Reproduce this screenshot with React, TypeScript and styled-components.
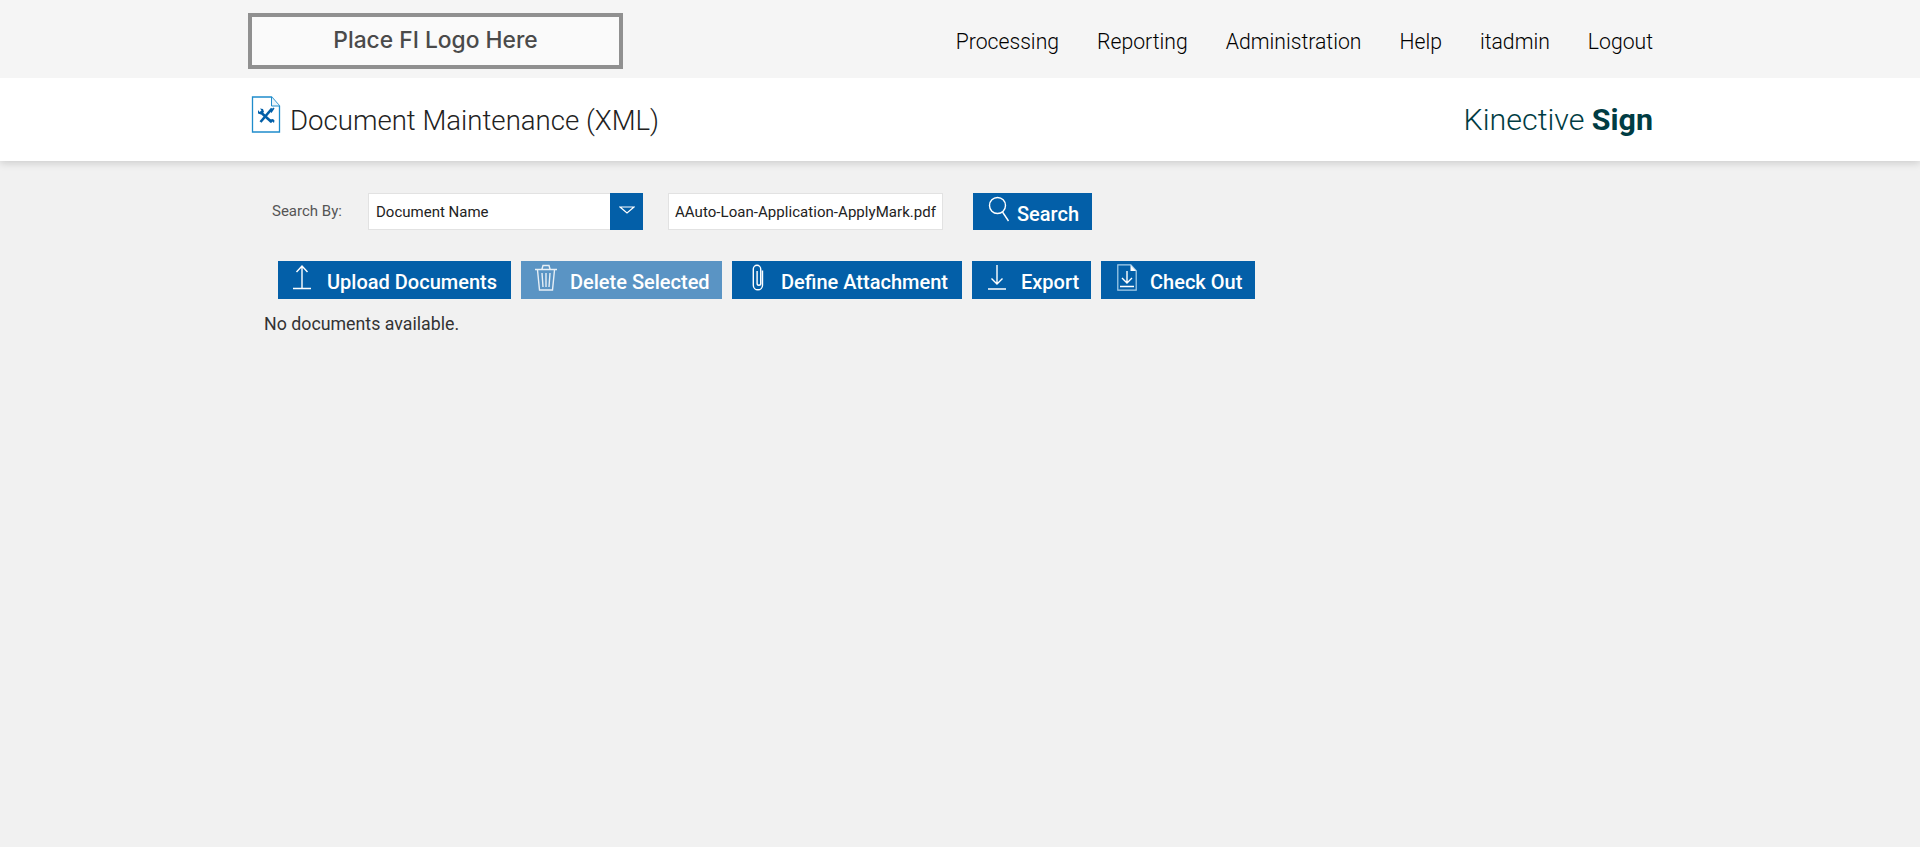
import React from "react";
import styled, { createGlobalStyle } from "styled-components";

const Global = createGlobalStyle`
  html, body { margin: 0; padding: 0; background: #f1f1f1; }
  body { font-family: Roboto, "Liberation Sans", sans-serif; min-height: 847px; }
  * { box-sizing: border-box; }
`;

const TopBar = styled.header`
  height: 78px;
  background: #f5f5f5;
  padding: 13px 267px 0 248px;
  display: flex;
  justify-content: space-between;
  align-items: flex-start;
  position: relative;
  z-index: 1;
`;
const LogoBox = styled.div`
  width: 375px;
  height: 56px;
  border: 4px solid #909090;
  background: #fafafa;
  display: flex;
  align-items: center;
  justify-content: center;
  font-family: Inter, "Noto Sans", sans-serif;
  font-size: 22.8px;
  font-weight: 500;
  color: #4a4a4a;
  padding-bottom: 4px;
`;
const Nav = styled.nav`
  display: flex;
  gap: 38px;
  padding-top: 16px;
`;
const NavLink = styled.a`
  font-size: 21.2px;
  font-weight: 300;
  line-height: 26px;
  color: #000;
`;
const TitleBar = styled.div`
  height: 83px;
  background: #fff;
  box-shadow: 0 2px 8px rgba(0, 0, 0, 0.16);
  padding: 18px 267px 0 251px;
  display: flex;
  justify-content: space-between;
  align-items: flex-start;
  position: relative;
`;
const TitleLeft = styled.div`
  display: flex;
  align-items: flex-start;
  gap: 9px;
`;
const Title = styled.h1`
  margin: 8px 0 0;
  font-size: 27.6px;
  line-height: 34px;
  font-weight: 300;
  color: #222;
`;
const Brand = styled.div`
  margin-top: 7px;
  font-size: 30.4px;
  line-height: 34px;
  font-weight: 300;
  color: #003c43;
  b { font-weight: 700; }
`;
const Content = styled.main`
  padding: 32px 0 0 264px;
`;
const SearchRow = styled.div`
  display: flex;
  align-items: center;
  height: 37px;
  padding-left: 8px;
`;
const SearchLabel = styled.label`
  width: 96px;
  font-size: 15px;
  color: #555;
  margin-top: -2px;
`;
const SelectBox = styled.div`
  width: 275px;
  height: 37px;
  display: flex;
  background: #fff;
  border: 1px solid #e2e2e2;
  border-right: 0;
  font-size: 15px;
  color: #222;
  align-items: center;
  padding: 1px 0 0 7px;
  position: relative;
`;
const Caret = styled.span`
  position: absolute;
  right: 0;
  top: -1px;
  width: 33px;
  height: 37px;
  background: #035fa8;
  display: flex;
  align-items: center;
  justify-content: center;
  padding-bottom: 3px;
`;
const TextBox = styled.div`
  width: 275px;
  height: 37px;
  margin-left: 25px;
  background: #fff;
  border: 1px solid #e2e2e2;
  display: flex;
  align-items: center;
  padding: 1px 5px 0 6px;
`;
const TextValue = styled.span`
  display: block;
  width: 100%;
  overflow: hidden;
  white-space: nowrap;
  font-size: 15px;
  letter-spacing: 0.05px;
  color: #222;
`;
const Btn = styled.button<{ $disabled?: boolean; $w: number; $gap: number; $pad: number }>`
  width: ${(p) => p.$w}px;
  height: 38px;
  border: 0;
  padding: 4px 0 0 ${(p) => p.$pad}px;
  display: flex;
  align-items: center;
  gap: ${(p) => p.$gap}px;
  background: ${(p) => (p.$disabled ? "#5a94c4" : "#035fa8")};
  color: #fff;
  font-family: inherit;
  font-size: 20px;
  font-weight: 500;
  white-space: nowrap;
  svg { flex: none; margin-top: -10px; }
`;
const SearchBtn = styled(Btn)`
  margin-left: 30px;
  height: 37px;
`;
const Actions = styled.div`
  display: flex;
  gap: 10px;
  margin-top: 31px;
  padding-left: 14px;
`;
const Empty = styled.p`
  margin: 11px 0 0;
  font-size: 17.8px;
  line-height: 28px;
  color: #333;
`;

const s = { fill: "none", stroke: "#fff", strokeWidth: 1.4 };

const App = () => (
  <>
    <Global />
    <TopBar>
      <LogoBox>Place FI Logo Here</LogoBox>
      <Nav>
        {["Processing", "Reporting", "Administration", "Help", "itadmin", "Logout"].map((n) => (
          <NavLink key={n}>{n}</NavLink>
        ))}
      </Nav>
    </TopBar>
    <TitleBar>
      <TitleLeft>
        <svg width="30" height="37" viewBox="0 0 30 37">
          <path d="M1.5 1h19l8 9v26h-27z" fill="#fff" stroke="#1f8ccb" strokeWidth="1.3" />
          <path d="M20.5 1v9h8" fill="#eaf4fa" stroke="#1f8ccb" strokeWidth="1" />
          <path d="M10 16.5l10.5 9.5" stroke="#035fa8" strokeWidth="2.6" fill="none" />
          <path d="M21 12.5L9.5 26" stroke="#035fa8" strokeWidth="2.6" fill="none" />
          <path d="M7 14l1.5 2 2-1.5L9 12.5l3 .5 1 3-3 2.5-3-1z" fill="#035fa8" />
          <path d="M19 23.5l3-.5 1.5 1.5-.5 2.5-1.5-1.5-1 1.5z" fill="#035fa8" />
          <path d="M18.5 15l4-3.5 1 1-3 4.5z" fill="#035fa8" />
        </svg>
        <Title>Document Maintenance (XML)</Title>
      </TitleLeft>
      <Brand>
        Kinective <b>Sign</b>
      </Brand>
    </TitleBar>
    <Content>
      <SearchRow>
        <SearchLabel>Search By:</SearchLabel>
        <SelectBox>
          Document Name
          <Caret>
            <svg width="16" height="8" viewBox="0 0 16 8">
              <path d="M1 1h14L8 7z" fill="none" stroke="#fff" strokeWidth="1.2" />
            </svg>
          </Caret>
        </SelectBox>
        <TextBox>
          <TextValue>AAuto-Loan-Application-ApplyMark.pdf</TextValue>
        </TextBox>
        <SearchBtn $w={119} $pad={15} $gap={7}>
          <svg width="22" height="26" viewBox="0 0 22 26">
            <circle cx="9.5" cy="9.5" r="8" {...s} />
            <path d="M14.5 16l6 9" {...s} />
          </svg>
          Search
        </SearchBtn>
      </SearchRow>
      <Actions>
        <Btn $w={233} $pad={15} $gap={16}>
          <svg width="18" height="26" viewBox="0 0 18 26">
            <path d="M9 24V2M3.5 8L9 2l5.5 6M0 24.5h18" {...s} />
          </svg>
          Upload Documents
        </Btn>
        <Btn $w={201} $pad={14} $gap={13} $disabled>
          <svg width="22" height="27" viewBox="0 0 22 27" opacity="0.85">
            <path d="M0 5.5h22M7 5l1-3.5h6L15 5M2.5 6l2 20h13l2-20M7 9l1 14M11 9v14M15 9l-1 14" {...s} />
          </svg>
          Delete Selected
        </Btn>
        <Btn $w={230} $pad={20} $gap={17}>
          <svg width="12" height="27" viewBox="0 0 12 27">
            <path d="M10.5 6.5v14.7a4.6 4.6 0 0 1-9.2 0V5a3.7 3.7 0 0 1 7.4 0v14.5a1.8 1.8 0 0 1-3.6 0V7" {...s} strokeWidth="1.4" />
          </svg>
          Define Attachment
        </Btn>
        <Btn $w={119} $pad={16} $gap={15}>
          <svg width="18" height="26" viewBox="0 0 18 26">
            <path d="M9 1v19M3.5 14.5L9 20l5.5-5.5M0 25h18" {...s} />
          </svg>
          Export
        </Btn>
        <Btn $w={154} $pad={16} $gap={13}>
          <svg width="20" height="27" viewBox="0 0 20 27">
            <path d="M.8.8h13l5.4 6v19.4H.8z" fill="none" stroke="#a9d1ec" strokeWidth="1.2" />
            <path d="M13.5 1v6H19z" fill="#fff" />
            <path d="M10 7v12M5 14l5 5 5-5M3 22.5h14" {...s} />
          </svg>
          Check Out
        </Btn>
      </Actions>
      <Empty>No documents available.</Empty>
    </Content>
  </>
);

export default App;
